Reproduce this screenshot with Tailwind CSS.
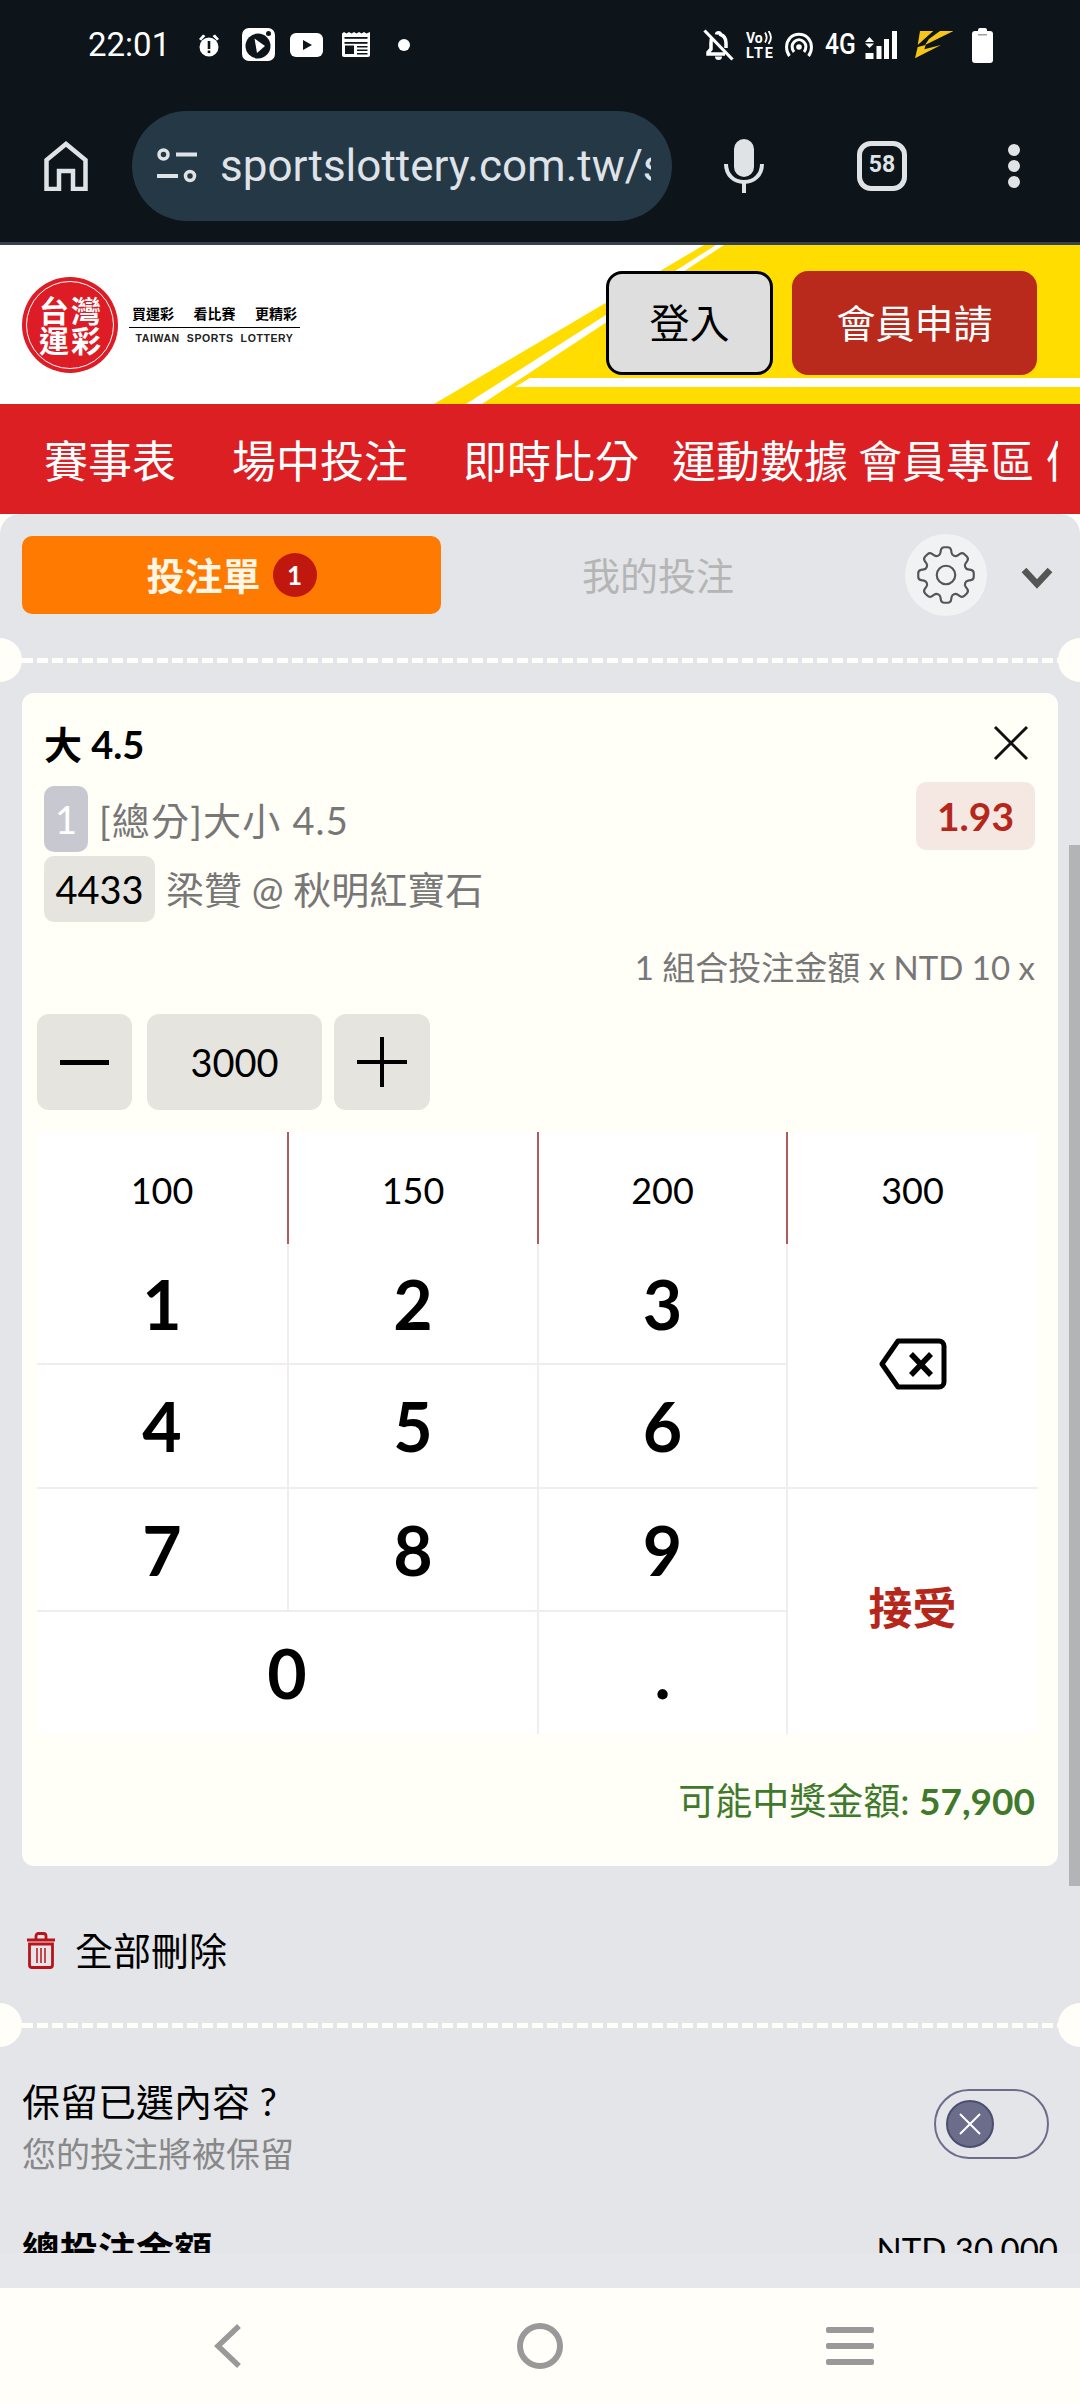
<!DOCTYPE html>
<html lang="zh-Hant">
<head>
<meta charset="utf-8">
<title>台灣運彩</title>
<script src="https://cdn.jsdelivr.net/npm/@tailwindcss/browser@4"></script>
</head>
<body class="m-0">
<div class="w-[1080px] h-[2404px] overflow-hidden flex flex-col bg-[#fffef8] font-['Lato','Noto_Sans_CJK_TC',sans-serif]">

  <!-- status + browser bar -->
  <div class="h-[242px] bg-[#0d141a] flex flex-col shrink-0">
    <div class="h-[89px] flex items-center text-white relative">
      <span class="ml-[88px] font-['Roboto'] text-[33px] w-[110px] leading-none">22:01</span>
      <svg class="w-[22px] h-[24px]" viewBox="0 0 22 24"><circle cx="11" cy="14" r="9.5" fill="#fff"/><path d="M1 6 5 1.5 7.5 3 3 7.5ZM21 6l-4-4.5L14.500 3 19 7.500Z" fill="#fff"/><rect x="9.700" y="8" width="2.600" height="8" fill="#0d141a"/><rect x="9.700" y="17.500" width="2.600" height="2.600" fill="#0d141a"/></svg>
      <svg class="w-[33px] h-[33px] ml-[22px]" viewBox="0 0 33 33"><rect width="33" height="33" rx="7" fill="#fff"/><circle cx="16" cy="18" r="12.500" fill="#0d141a"/><polygon points="12.500,10.500 23,18 15,25" fill="#fff"/><circle cx="26.500" cy="5.500" r="2.500" fill="#0d141a"/></svg>
      <svg class="w-[33px] h-[24px] ml-[15px]" viewBox="0 0 33 24"><rect width="33" height="24" rx="6" fill="#fff"/><polygon points="13,7 22,12 13,17" fill="#0d141a"/></svg>
      <svg class="w-[28px] h-[25px] ml-[19px]" viewBox="0 0 28 25"><path d="M0 1.500 2 0l2.500 1.500L7 0l2.500 1.500L12 0l2.500 1.500L17 0l2.500 1.500L22 0l2.500 1.500L28 0v23a2 2 0 0 1-2 2H2a2 2 0 0 1-2-2Z" fill="#fff"/><rect x="2.500" y="5" width="23" height="1.800" fill="#0d141a"/><rect x="2.500" y="10" width="23" height="1.800" fill="#0d141a"/><rect x="3" y="13.500" width="9" height="8.500" fill="#0d141a"/><rect x="15" y="14" width="10.500" height="1.500" fill="#0d141a"/><rect x="15" y="17.500" width="10.500" height="1.500" fill="#0d141a"/><rect x="15" y="21" width="10.500" height="1.500" fill="#0d141a"/></svg>
      <span class="w-[12px] h-[12px] rounded-full bg-white ml-[28px]"></span>

      <svg class="w-[31px] h-[32px] ml-[293px]" viewBox="0 0 31 32"><path d="M9 8.500C8 10 8 12 8 14v6l-3 3.500v1.500h17M23 19v-5c0-4.500-2.500-7.500-5.500-8.500C17 3 14 3 13.500 5.500" fill="none" stroke="#fff" stroke-width="3.500"/><path d="M12 27.500a3.500 3.500 0 0 0 7 0Z" fill="#fff"/><path d="M1.500 1.500 29.500 30.500" stroke="#fff" stroke-width="3.200"/></svg>
      <svg class="w-[27px] h-[27px] ml-[12px]" viewBox="0 0 27 27"><text x="0" y="12" font-family="Roboto" font-size="14" font-weight="700" fill="#fff">Vo</text><path d="M19 1.500c2 3 2 7 0 10M22.500 0c3 4 3 9 0 13" fill="none" stroke="#fff" stroke-width="1.800"/><text x="0" y="26.500" font-family="Roboto" font-size="14.500" font-weight="700" fill="#fff" textLength="27">LTE</text></svg>
      <svg class="w-[28px] h-[26px] ml-[12px]" viewBox="0 0 28 26"><path d="M4.500 24C.5 19 .5 11 5 6c5-5 13-5 18 0 4.500 5 4.500 13 .5 18" fill="none" stroke="#fff" stroke-width="3"/><path d="M9 20c-2.500-3-2.500-7.500 0-10 3-3 7-3 10 0 2.500 2.500 2.500 7 0 10" fill="none" stroke="#fff" stroke-width="3"/><circle cx="14" cy="15" r="2.800" fill="#fff"/></svg>
      <span class="ml-[12px] w-[32px] font-['Roboto'] font-medium text-[29px] origin-left scale-x-[0.85] leading-none whitespace-nowrap">4G</span>
      <svg class="w-[32px] h-[28px] ml-[8px]" viewBox="0 0 32 28"><polygon points="4.500,6 9,11 0,11" fill="#fff"/><polygon points="0,12.500 9,12.500 4.500,17" fill="#fff"/><rect x="0.500" y="22" width="8" height="6" fill="#fff"/><rect x="11.500" y="15" width="5" height="13" fill="#fff"/><rect x="19" y="8" width="5" height="20" fill="#fff"/><rect x="27" y="0" width="5" height="28" fill="#fff"/></svg>
      <svg class="w-[38px] h-[28px] ml-[18px]" viewBox="0 0 38 28"><polygon points="5,0 18.300,0 2.700,14" fill="#f5c518"/><polygon points="25,0 38.300,0 10,14 14,8" fill="#f5c518"/><polygon points="2.700,16 10.700,14 9.300,18.300 26,14 0,27.300" fill="#f5c518"/></svg>
      <svg class="w-[21px] h-[36px] ml-[19px]" viewBox="0 0 21 36"><path d="M6 3a2 2 0 0 1 2-2h5a2 2 0 0 1 2 2v1h3a3 3 0 0 1 3 3v26a3 3 0 0 1-3 3H3a3 3 0 0 1-3-3V7a3 3 0 0 1 3-3h3Z" fill="#fff"/><rect x="6" y="7" width="9" height="1.500" fill="#9aa0a5"/></svg>
    </div>
    <div class="flex-1 flex items-center">
      <svg class="w-[44px] h-[50px] ml-[44px]" viewBox="0 0 44 50"><path d="M2.500 48V19L22 3l19.500 16v29H29V30H15v18Z" fill="none" stroke="#dfe3e6" stroke-width="4.500"/></svg>
      <div class="ml-[44px] w-[540px] h-[110px] rounded-full bg-[#243845] flex items-center">
        <svg class="w-[40px] h-[36px] ml-[25px] shrink-0" viewBox="0 0 40 36"><circle cx="6.500" cy="6.500" r="4.500" fill="none" stroke="#dfe3e6" stroke-width="3.500"/><rect x="19" y="4.500" width="21" height="4" fill="#dfe3e6"/><rect x="0" y="26" width="21" height="4" fill="#dfe3e6"/><circle cx="33" cy="28" r="4.500" fill="none" stroke="#dfe3e6" stroke-width="3.500"/></svg>
        <div class="ml-[23px] w-[431px] overflow-hidden whitespace-nowrap font-['Roboto'] text-[44px] leading-[60px] text-[#dfe3e8]">sportslottery.com.tw/sports</div>
      </div>
      <svg class="w-[40px] h-[54px] ml-[52px]" viewBox="0 0 40 54"><rect x="10" y="0" width="20" height="38" rx="10" fill="#dfe3e6"/><path d="M2 25c0 11 8 18 18 18s18-7 18-18" fill="none" stroke="#dfe3e6" stroke-width="4"/><rect x="18" y="42" width="4" height="12" fill="#dfe3e6"/></svg>
      <div class="ml-[93px] w-[50px] h-[50px] rounded-[14px] border-[5px] border-[#dfe3e6] flex items-center justify-center font-['Roboto'] font-bold text-[23px] text-[#dfe3e6]">58</div>
      <div class="ml-[101px] w-[12px] flex flex-col gap-[4px]">
        <span class="w-[12px] h-[12px] rounded-full bg-[#dfe3e6]"></span>
        <span class="w-[12px] h-[12px] rounded-full bg-[#dfe3e6]"></span>
        <span class="w-[12px] h-[12px] rounded-full bg-[#dfe3e6]"></span>
      </div>
    </div>
  </div>
  <div class="h-[3px] bg-[#39424a] shrink-0"></div>

  <!-- site header -->
  <header class="relative h-[159px] bg-white shrink-0 flex items-center justify-between overflow-hidden">
    <svg class="absolute inset-0 w-[1080px] h-[159px]" viewBox="0 0 1080 159"><polygon points="704,0 1080,0 1080,159 434,159" fill="#ffdd00"/><polygon points="716,0 724,0 482,159 466,159" fill="#fff"/><polygon points="530,133 1080,133 1080,142 515,142" fill="#fff"/></svg>
    <div class="relative flex items-center ml-[22px]">
      <div class="w-[96px] h-[96px] rounded-full bg-[#dd1c26] flex items-center justify-center">
        <div class="w-[88px] h-[88px] rounded-full border-[1.500px] border-white grid grid-cols-[32px_32px] justify-center place-items-center content-center text-white font-bold text-[30px] leading-[30px]">
          <span>台</span><span>灣</span><span>運</span><span>彩</span>
        </div>
      </div>
      <div class="ml-[11px] w-[171px] flex flex-col items-center">
        <div class="w-full flex justify-between px-[3px] text-[14px] font-bold leading-[20px] text-black whitespace-nowrap"><span>買運彩</span><span>看比賽</span><span>更精彩</span></div>
        <div class="w-full h-[1px] bg-black my-[3px]"></div>
        <div class="text-[10.500px] font-bold leading-[14px] tracking-[0.6px] text-[#222] font-['Liberation_Sans'] whitespace-nowrap">TAIWAN&nbsp; SPORTS&nbsp; LOTTERY</div>
      </div>
    </div>
    <div class="relative flex items-center gap-[19px] mr-[43px] mb-[3px]">
      <button class="w-[167px] h-[104px] rounded-[16px] border-[3px] border-black bg-[#dedede] text-black text-[40px]">登入</button>
      <button class="w-[245px] h-[104px] rounded-[16px] bg-[#b92a1c] text-white text-[39px]">會員申請</button>
    </div>
  </header>

  <!-- red nav -->
  <nav class="h-[110px] bg-[#dc1f23] shrink-0 flex items-center text-white text-[44px] leading-none pt-[4px]">
    <div class="w-[1058px] overflow-hidden flex items-center whitespace-nowrap pl-[44px]">
      <span class="shrink-0">賽事表</span>
      <span class="shrink-0 ml-[56px]">場中投注</span>
      <span class="shrink-0 ml-[55px]">即時比分</span>
      <span class="shrink-0 ml-[33px]">運動數據</span>
      <span class="shrink-0 ml-[10px]">會員專區</span>
      <span class="shrink-0 ml-[12px]">優惠活動</span>
    </div>
  </nav>

  <!-- bet slip panel -->
  <main class="relative flex-1 bg-[#e3e5e8] rounded-t-[20px] flex flex-col overflow-hidden">
    <div class="h-[1739px] overflow-hidden shrink-0 flex flex-col">
      <div class="flex items-center mt-[20px] ml-[22px] h-[82px] shrink-0">
        <div class="w-[419px] h-[78px] rounded-[10px] bg-[#ff7a00] flex items-center justify-center text-[#fff6e6] text-[38px] font-bold">
          <span>投注單</span>
          <span class="ml-[12px] w-[44px] h-[44px] rounded-full bg-[#c0170f] text-white text-[26px] font-bold flex items-center justify-center">1</span>
        </div>
        <div class="w-[434px] text-center text-[38px] text-[#b5b5b5]">我的投注</div>
        <div class="ml-[30px] w-[82px] h-[82px] rounded-full bg-[#f1f2f4] flex items-center justify-center">
          <svg class="w-[74px] h-[74px] shrink-0" viewBox="0 0 24 24" fill="none" stroke="#555" stroke-width="0.700"><path d="M10.343 3.94c.09-.542.56-.94 1.11-.94h1.093c.55 0 1.02.398 1.11.94l.149.894c.07.424.384.764.78.93.398.164.855.142 1.205-.108l.737-.527a1.125 1.125 0 0 1 1.45.12l.773.774c.39.389.44 1.002.12 1.45l-.527.737c-.25.35-.272.806-.107 1.204.165.397.505.71.93.78l.893.15c.543.09.94.56.94 1.109v1.094c0 .55-.397 1.02-.94 1.11l-.893.149c-.425.07-.765.383-.93.78-.165.398-.143.854.107 1.204l.527.738c.32.447.269 1.06-.12 1.45l-.774.773a1.125 1.125 0 0 1-1.449.12l-.738-.527c-.35-.25-.806-.272-1.203-.107-.397.165-.71.505-.781.929l-.149.894c-.09.542-.56.94-1.11.94h-1.094c-.55 0-1.019-.398-1.11-.94l-.148-.894c-.071-.424-.384-.764-.781-.93-.398-.164-.854-.142-1.204.108l-.738.527c-.447.32-1.06.269-1.45-.12l-.773-.774a1.125 1.125 0 0 1-.12-1.45l.527-.737c.25-.35.273-.806.108-1.204-.165-.397-.505-.71-.93-.78l-.894-.15c-.542-.09-.94-.56-.94-1.109v-1.094c0-.55.398-1.02.94-1.11l.894-.149c.424-.07.765-.383.93-.78.165-.398.143-.854-.107-1.204l-.527-.738a1.125 1.125 0 0 1 .12-1.45l.773-.773a1.125 1.125 0 0 1 1.45-.12l.737.527c.35.25.807.272 1.204.107.397-.165.71-.505.78-.929l.15-.894Z"/><circle cx="12" cy="12" r="3"/></svg>
        </div>
        <svg class="ml-[34px] w-[32px] h-[22px] mt-[6px]" viewBox="0 0 32 22"><path d="M3 3 16 17 29 3" fill="none" stroke="#555" stroke-width="6.500"/></svg>
      </div>

      <div class="relative mt-[42px] h-[5px] shrink-0 mx-[22px] bg-[repeating-linear-gradient(90deg,#fffef8_0,#fffef8_11px,transparent_11px,transparent_15px)]">
        <span class="absolute left-[-44px] top-[-20px] w-[44px] h-[44px] rounded-full bg-[#fffef8]"></span>
        <span class="absolute right-[-44px] top-[-20px] w-[44px] h-[44px] rounded-full bg-[#fffef8]"></span>
      </div>

      <!-- bet card -->
      <section class="mt-[30px] mx-[22px] w-[1036px] h-[1173px] shrink-0 rounded-[12px] bg-[#fffef7] px-[22px] flex flex-col">
        <div class="mt-[28px] h-[46px] flex items-center justify-between shrink-0">
          <span class="text-[38px] font-bold text-black leading-none">大 4.5</span>
          <svg class="w-[36px] h-[36px] mr-[7px] mb-[2px]" viewBox="0 0 36 36"><path d="M2 2 34 34M34 2 2 34" stroke="#111" stroke-width="3"/></svg>
        </div>
        <div class="mt-[15px] h-[68px] flex justify-between shrink-0">
          <div class="flex items-center mt-[4px] h-[66px]">
            <span class="w-[44px] h-[66px] rounded-[10px] bg-[#c8c9d0] text-white text-[38px] flex items-center justify-center">1</span>
            <span class="ml-[11px] text-[38px] tracking-[1.200px] text-[#777] leading-none mt-[2px]">[總分]大小 4.5</span>
          </div>
          <span class="w-[119px] h-[68px] mr-[1px] rounded-[10px] bg-[#f5e8e2] text-[#b5271a] text-[39px] font-bold flex items-center justify-center">1.93</span>
        </div>
        <div class="mt-[6px] h-[66px] flex items-center shrink-0">
          <span class="w-[111px] h-[66px] rounded-[10px] bg-[#e5e4df] text-black text-[38px] flex items-center justify-center">4433</span>
          <span class="ml-[11px] text-[38px] text-[#777] leading-none">梁贊 @ 秋明紅寶石</span>
        </div>
        <div class="mt-[25px] h-[40px] flex items-center justify-end text-[33px] text-[#777] leading-none shrink-0 pr-[1px]">1 組合投注金額 x NTD 10 x</div>
        <div class="mt-[27px] h-[96px] -ml-[7px] flex shrink-0">
          <div class="w-[95px] h-[96px] rounded-[12px] bg-[#e5e4df] flex items-center justify-center"><span class="w-[49px] h-[5px] bg-black"></span></div>
          <div class="ml-[15px] w-[175px] h-[96px] rounded-[12px] bg-[#e5e4df] flex items-center justify-center text-[38px] text-black">3000</div>
          <div class="ml-[12px] w-[96px] h-[96px] rounded-[12px] bg-[#e5e4df] flex items-center justify-center"><svg class="w-[50px] h-[50px]" viewBox="0 0 50 50"><path d="M0 25H50M25 0V50" stroke="#000" stroke-width="4"/></svg></div>
        </div>

        <!-- keypad -->
        <div class="mt-[22px] -ml-[7px] w-[1000px] h-[602px] shrink-0 bg-white grid grid-cols-[252px_250px_249px_249px] grid-rows-[112px_121px_124px_123px_122px] text-black">
          <div class="flex items-center justify-center text-[36px] pt-[4px] border-r-2 border-[#ad5b5b]">100</div>
          <div class="flex items-center justify-center text-[36px] pt-[4px] border-r-2 border-[#ad5b5b]">150</div>
          <div class="flex items-center justify-center text-[36px] pt-[4px] border-r-2 border-[#ad5b5b]">200</div>
          <div class="flex items-center justify-center text-[36px] pt-[4px]">300</div>

          <div class="flex items-center justify-center text-[68px] font-bold border-r-2 border-b-2 border-[#f1ecef]">1</div>
          <div class="flex items-center justify-center text-[68px] font-bold border-r-2 border-b-2 border-[#f1ecef]">2</div>
          <div class="flex items-center justify-center text-[68px] font-bold border-r-2 border-b-2 border-[#f1ecef]">3</div>
          <div class="row-span-2 flex items-center justify-center border-b-2 border-[#f1ecef] pb-[4px]">
            <svg class="w-[68px] h-[52px]" viewBox="0 0 68 52"><path d="M19 3H60a5 5 0 0 1 5 5V44a5 5 0 0 1-5 5H19L3 26Z" fill="none" stroke="#000" stroke-width="5" stroke-linejoin="round"/><path d="M32 16 52 37M52 16 32 37" stroke="#000" stroke-width="5.500"/></svg>
          </div>

          <div class="flex items-center justify-center text-[68px] font-bold border-r-2 border-b-2 border-[#f1ecef]">4</div>
          <div class="flex items-center justify-center text-[68px] font-bold border-r-2 border-b-2 border-[#f1ecef]">5</div>
          <div class="flex items-center justify-center text-[68px] font-bold border-r-2 border-b-2 border-[#f1ecef]">6</div>

          <div class="flex items-center justify-center text-[68px] font-bold border-r-2 border-b-2 border-[#f1ecef]">7</div>
          <div class="flex items-center justify-center text-[68px] font-bold border-r-2 border-b-2 border-[#f1ecef]">8</div>
          <div class="flex items-center justify-center text-[68px] font-bold border-r-2 border-b-2 border-[#f1ecef]">9</div>
          <div class="row-span-2 flex items-center justify-center text-[44px] font-bold text-[#b5271a] pb-[8px]">接受</div>

          <div class="col-span-2 flex items-center justify-center text-[68px] font-bold border-r-2 border-[#f1ecef]">0</div>
          <div class="flex items-center justify-center text-[68px] font-bold border-r-2 border-[#f1ecef]">.</div>
        </div>

        <div class="mt-[44px] h-[44px] flex items-center justify-end text-[37px] text-[#3f7a2c] leading-none shrink-0 pr-[1px]">可能中獎金額:&nbsp;<span class="font-bold">57,900</span></div>
      </section>

      <div class="mt-[65px] h-[38px] ml-[26px] flex items-center shrink-0">
        <svg class="w-[30px] h-[37px]" viewBox="0 0 30 37" fill="none" stroke="#b8141a" stroke-width="2.800"><path d="M1 8H29M10 7V4a2.500 2.500 0 0 1 2.500-2.500h5A2.500 2.500 0 0 1 20 4v3"/><path d="M3.500 12H26.500V33a2.500 2.500 0 0 1-2.500 2.500H6A2.500 2.500 0 0 1 3.500 33Z"/><path d="M11 16V31M15 16V31M19 16V31" stroke-width="1.500"/></svg>
        <span class="ml-[19px] text-[38px] text-black leading-none">全部刪除</span>
      </div>

      <div class="relative mt-[54px] h-[5px] shrink-0 mx-[22px] bg-[repeating-linear-gradient(90deg,#fffef8_0,#fffef8_11px,transparent_11px,transparent_15px)]">
        <span class="absolute left-[-44px] top-[-20px] w-[44px] h-[44px] rounded-full bg-[#fffef8]"></span>
        <span class="absolute right-[-44px] top-[-20px] w-[44px] h-[44px] rounded-full bg-[#fffef8]"></span>
      </div>

      <div class="mt-[50px] h-[98px] px-[22px] flex justify-between shrink-0 pr-[31px]">
        <div class="flex flex-col">
          <span class="h-[46px] text-[38px] leading-[46px] text-black">保留已選內容 ?</span>
          <span class="mt-[8px] h-[44px] text-[34px] leading-[44px] text-[#888]">您的投注將被保留</span>
        </div>
        <div class="mt-[11px] w-[115px] h-[70px] rounded-full border-2 border-[#6b6d8b] flex items-center pl-[10px]">
          <span class="w-[48px] h-[48px] rounded-full bg-[#6b6d8b] border-2 border-[#4c4e70] flex items-center justify-center"><svg class="w-[22px] h-[22px]" viewBox="0 0 22 22"><path d="M1 1 21 21M21 1 1 21" stroke="#fff" stroke-width="2"/></svg></span>
        </div>
      </div>

      <div class="mt-[51px] h-[44px] px-[22px] flex items-center justify-between shrink-0 text-black leading-none">
        <span class="text-[38px] font-bold">總投注金額</span>
        <span class="text-[33px]">NTD 30,000</span>
      </div>
    </div>
    <div class="flex-1 bg-[#e5e7ea]"></div>
    <span class="absolute right-0 top-[331px] w-[11px] h-[1041px] bg-[#b3b4b6]"></span>
  </main>

  <!-- android nav -->
  <footer class="h-[116px] bg-[#fffef8] shrink-0 flex items-center justify-between pl-[214px] pr-[206px]">
    <svg class="w-[28px] h-[44px]" viewBox="0 0 28 44"><path d="M25 2 4 22 25 42" fill="none" stroke="#999" stroke-width="5.500"/></svg>
    <span class="w-[46px] h-[46px] rounded-full border-[6px] border-[#999] ml-[12px]"></span>
    <span class="w-[48px] h-[38px] flex flex-col justify-between">
      <span class="h-[6px] rounded-[2px] bg-[#999]"></span>
      <span class="h-[6px] rounded-[2px] bg-[#999]"></span>
      <span class="h-[6px] rounded-[2px] bg-[#999]"></span>
    </span>
  </footer>
</div>
</body>
</html>
